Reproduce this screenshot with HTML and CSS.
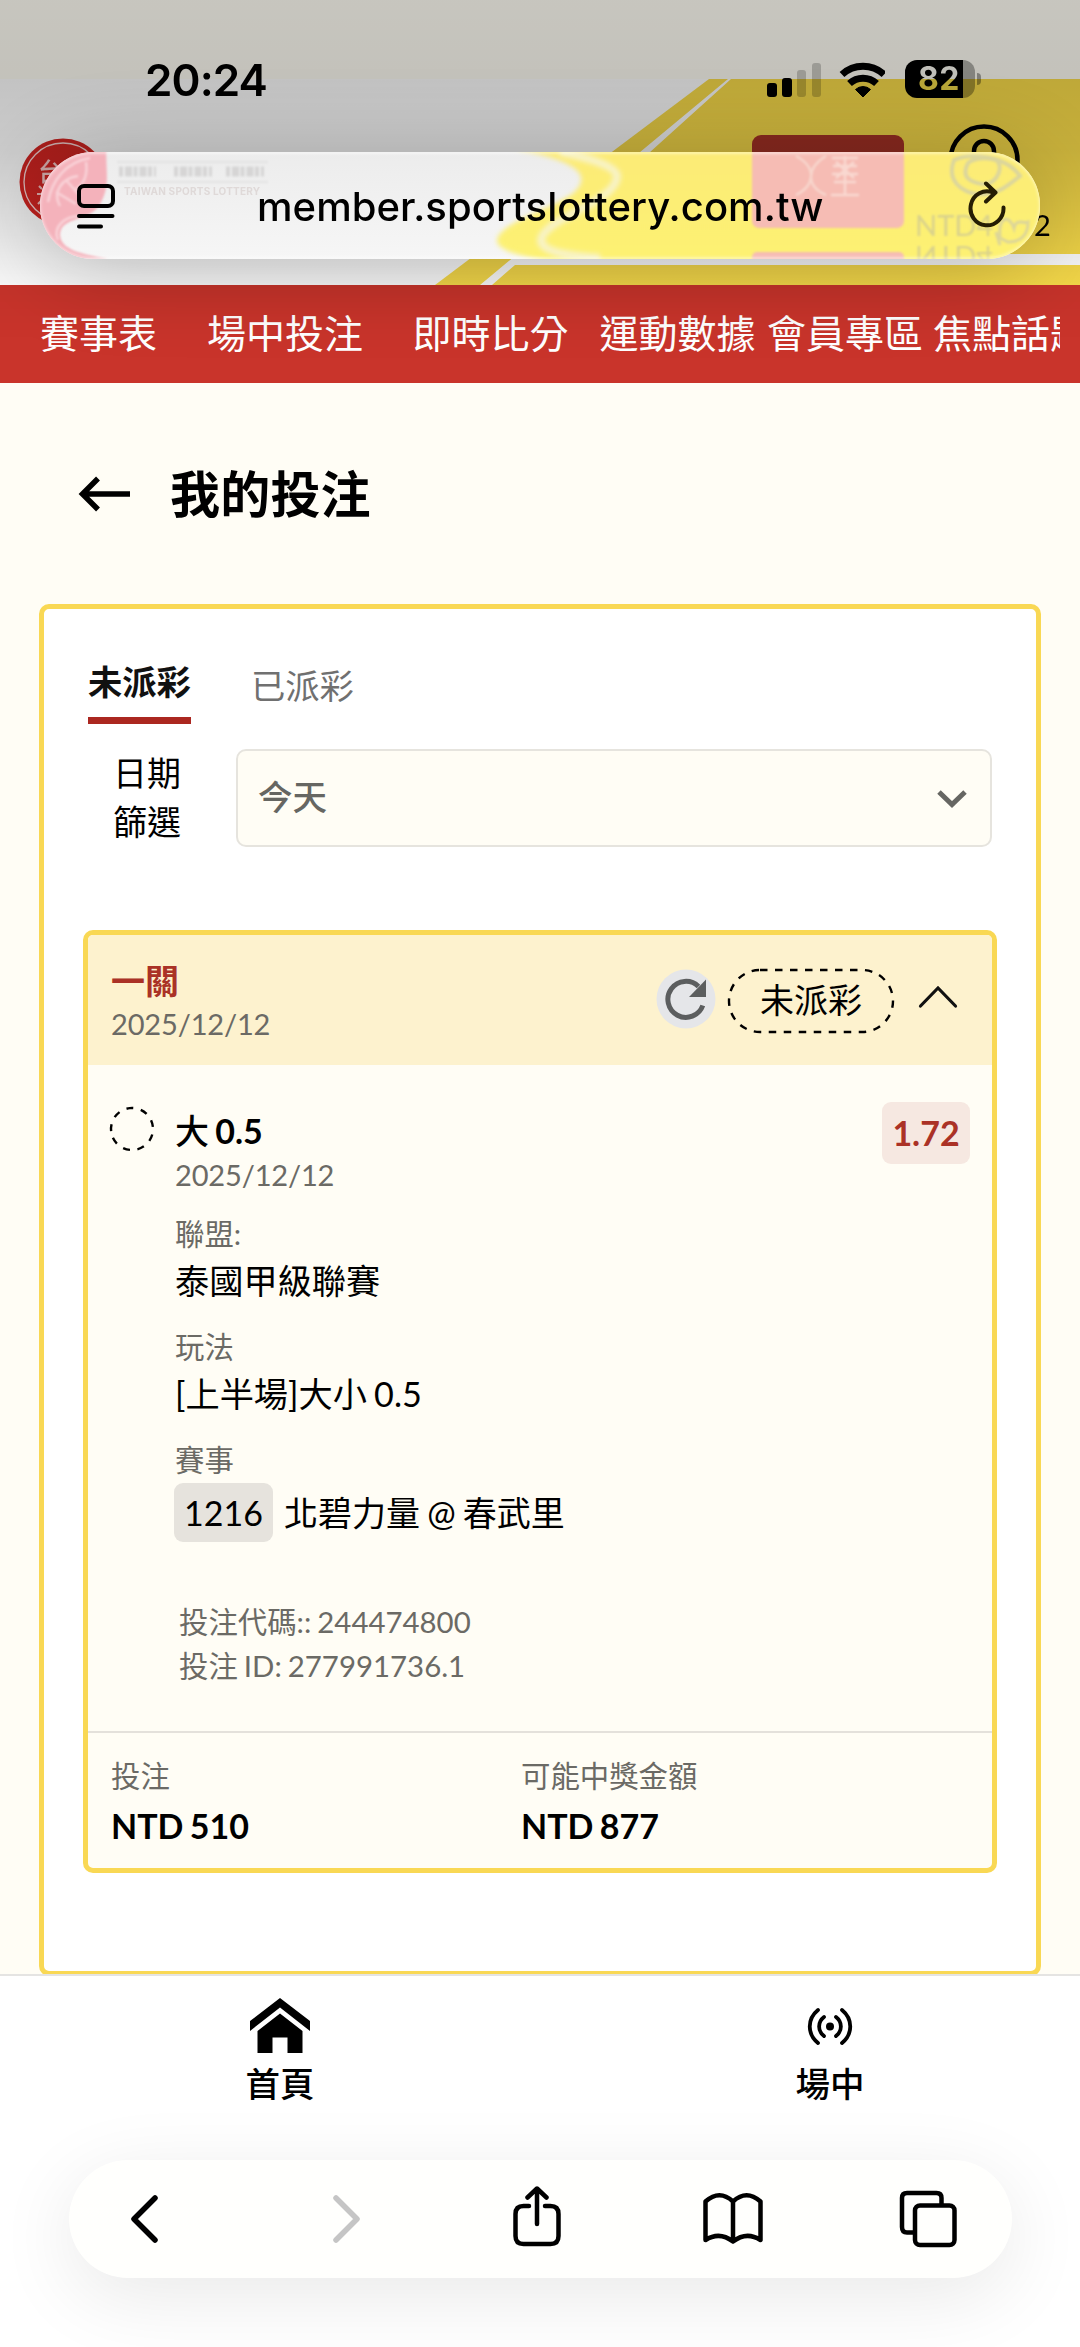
FILE: index.html
```html
<!DOCTYPE html>
<html lang="zh-Hant">
<head>
<meta charset="utf-8">
<meta name="viewport" content="width=device-width">
<title>我的投注</title>
<link rel="stylesheet" href="styles.css">
</head>
<body>
<div class="screen">
  <header class="top">
    <svg class="banner" viewBox="0 0 1080 285" aria-hidden="true">
      <rect width="1080" height="79" fill="#fffdf4"/>
      <rect y="79" width="1080" height="206" fill="#fff"/>
      <path d="M709 79H1080V285H435Z" fill="#f9dc4a"/>
      <path d="M728 79H731L517 265H1080V255H530L731 79Z" fill="#fff"/>
      <path d="M728 79H731L537 254H1080V265H515L492 285H480Z" fill="#fff"/>
      <circle cx="63" cy="182" r="43.5" fill="#d32522"/>
      <circle cx="63" cy="182" r="39" fill="none" stroke="#fff" stroke-opacity=".8" stroke-width="1.3"/>
      <text class="seal" x="38" y="181">台</text>
      <path d="M39 186L42 189M37 194H42M38 204L43 199" stroke="#fff" stroke-opacity=".7" stroke-width="2.200"/>
      <rect x="752" y="135" width="152" height="60" rx="9" fill="#a73226"/>
      <circle cx="984" cy="160" r="33.5" fill="none" stroke="#000" stroke-width="4.5"/>
      <path d="M974 156V151a10 10 0 0 1 20 0V156" fill="none" stroke="#000" stroke-width="4.5"/>
      <text class="balance" x="1034" y="235.500">2</text>
    </svg>
    <div class="dim"></div>
    <div class="status">
      <span class="clock">20:24</span>
      <svg class="signals" viewBox="764 58 120 40" aria-hidden="true">
        <rect x="766" y="82" width="10" height="14" rx="3"/>
        <rect x="781" y="77" width="10" height="19" rx="3"/>
        <rect x="796" y="69" width="9" height="27" rx="3" opacity=".2"/>
        <rect x="811" y="62" width="9" height="34" rx="3" opacity=".2"/>
        <path d="M862 96L854.500 88.500A11 11 0 0 1 869.500 88.500Z" stroke="#000" stroke-width="1" stroke-linejoin="round"/>
        <path d="M848.500 82.500A20 20 0 0 1 875.500 82.500" fill="none" stroke="#000" stroke-width="7"/>
        <path d="M841 73.500A31 31 0 0 1 883 73.500" fill="none" stroke="#000" stroke-width="7"/>
      </svg>
      <span class="battery"><span class="level">82</span></span>
    </div>
    <div class="address">
      <svg class="glass" viewBox="40 152 1000 107" aria-hidden="true">
        <defs>
          <linearGradient id="base" x1="0" y1="0" x2="0" y2="1"><stop offset="0" stop-color="#ececec"/><stop offset="1" stop-color="#f6f6f6"/></linearGradient>
          <linearGradient id="gold" x1="0" y1="0" x2="0" y2="1"><stop offset="0" stop-color="#fcea77"/><stop offset="1" stop-color="#fdf272"/></linearGradient>
          <filter id="b2" x="-10%" y="-10%" width="120%" height="120%"><feGaussianBlur stdDeviation="2.500"/></filter>
          <filter id="b1" x="-20%" y="-20%" width="140%" height="140%"><feGaussianBlur stdDeviation="1"/></filter>
        </defs>
        <rect x="40" y="152" width="1000" height="107" fill="url(#base)"/>
        <path d="M30 140H107C104 168 112 184 100 204C90 222 62 216 60 234C60 250 82 254 108 259H30Z" fill="#f4b2bb" filter="url(#b1)"/>
        <g fill="none" stroke="#fbdde1" stroke-opacity=".75" stroke-width="2.500" filter="url(#b1)">
          <path d="M48 202C52 180 66 162 90 158M60 206C52 192 62 178 78 176M66 180L80 196M56 192L76 204M86 162C88 174 84 186 74 190M58 240C52 226 66 216 80 216"/>
        </g>
        <g filter="url(#b1)">
          <path d="M117 162H268M117 182H268" stroke="#e0e0e0" stroke-width="1.500"/>
          <path d="M119 171.500H156M174 171.500H212M226 171.500H264" stroke="#d6d5d5" stroke-width="10" stroke-dasharray="4 2 7 1.500"/>
        </g>
        <text class="ghost-text" x="124" y="194.500" textLength="136">TAIWAN SPORTS LOTTERY</text>
        <path d="M520 150C570 160 590 172 578 188C566 206 500 220 497 240C496 252 530 258 560 264H1060V140H500Z" fill="url(#gold)" filter="url(#b2)"/>
        <path d="M560 152C590 158 616 166 617 176C617 202 544 218 541 240C541 252 570 256 600 258" fill="none" stroke="#f8f3c6" stroke-width="8" filter="url(#b2)"/>
        <g filter="url(#b1)">
          <rect x="752" y="146" width="152" height="82" rx="7" fill="#f6bcb4"/>
          <rect x="752" y="252" width="152" height="12" rx="5" fill="#f6bcb4"/>
          <path d="M796 156C818 168 814 186 796 195M826 156C806 168 806 186 826 195" fill="none" stroke="#f8d5cc" stroke-width="2.500"/>
          <path d="M832 158H858M833 166H857M832 174H858M834 182H856M831 195H859M845 156V195M836 162L854 178M854 162L836 178" fill="none" stroke="#f9d8d0" stroke-width="2.500"/>
          <path d="M954 160C944 186 972 196 982 194C996 196 1010 184 1020 176C1006 156 972 152 954 160ZM968 163C958 182 980 184 986 184C998 182 1004 166 996 160C986 157 974 158 968 163Z" fill="none" stroke="#dcd69c" stroke-width="4"/>
          <path d="M1000 238C998 214 1010 216 1014 228C1016 218 1024 224 1028 222C1028 236 1020 242 1008 242ZM996 232L1000 245" fill="none" stroke="#dcd59a" stroke-width="3"/>
          <text class="ghost-money" x="915" y="235.500">NTD4</text>
          <text class="ghost-money" transform="translate(915 245.500) scale(1 -1)" x="0" y="0">NTD4</text>
        </g>
      </svg>
      <svg class="page-menu" viewBox="0 0 40 48" aria-hidden="true"><g fill="none" stroke="#000" stroke-linecap="round"><rect x="3" y="3" width="34" height="20" rx="5" stroke-width="4"/><path d="M3 33H36.500M3 43.500H25" stroke-width="4"/></g></svg>
      <span class="url">member.sportslottery.com.tw</span>
      <svg class="reload" viewBox="0 0 40 50" aria-hidden="true"><path d="M36.500 26.500A16.500 17 0 1 1 26 11.500M19 2.500L28.500 11.500L19 20.500" fill="none" stroke="#251d04" stroke-width="4" stroke-linecap="round" stroke-linejoin="round"/></svg>
    </div>
  </header>

  <nav class="menu">
    <a>賽事表</a><a class="n2">場中投注</a><a class="n3">即時比分</a><a class="n4">運動數據</a><a class="n5">會員專區</a><a class="n6">焦點話題</a>
  </nav>

  <main>
    <div class="heading">
      <svg class="back" viewBox="0 0 54 38" aria-hidden="true"><path d="M52 19H4M20 3.500L4.500 19L20 34.500" fill="none" stroke="#000" stroke-width="5.500"/></svg>
      <h1>我的投注</h1>
    </div>
    <section class="panel">
      <div class="tabs"><span class="tab active">未派彩</span><span class="tab">已派彩</span></div>
      <div class="filter">
        <label>日期<br>篩選</label>
        <div class="select"><span>今天</span>
          <svg width="30" height="18" viewBox="0 0 30 18" aria-hidden="true"><path d="M2 2L15 14.500L28 2" fill="none" stroke="#666662" stroke-width="5"/></svg>
        </div>
      </div>

      <article class="bet">
        <div class="bet-head">
          <div class="bet-title"><strong>一關</strong><span class="small date">2025/12/12</span></div>
          <svg class="refresh" viewBox="0 0 60 60" aria-hidden="true"><circle cx="30" cy="30" r="29.500" fill="#e5e6e9"/><path d="M46.800 36.500A18 18 0 1 1 42.500 17.500" fill="none" stroke="#5c5e5f" stroke-width="5"/><path d="M50 10.500V28H33Z" fill="#5c5e5f"/></svg>
          <div class="pill"><svg viewBox="0 0 168 66" aria-hidden="true"><rect x="2" y="2" width="164" height="62" rx="31" fill="none" stroke="#000" stroke-width="2.400" stroke-dasharray="7.500 7.500"/></svg><span>未派彩</span></div>
          <svg class="up" viewBox="0 0 40 24" aria-hidden="true"><path d="M2.500 21L20 3L37.500 21" fill="none" stroke="#111" stroke-width="3.200" stroke-linecap="round"/></svg>
        </div>
        <div class="bet-body">
          <svg class="dot" viewBox="0 0 46 46" aria-hidden="true"><circle cx="23" cy="23" r="21" fill="none" stroke="#000" stroke-width="2.400" stroke-dasharray="7 7.660" transform="rotate(174 23 23)"/></svg>
          <div class="detail">
            <div class="pick"><span class="side">大</span> 0.5</div>
            <div class="small date">2025/12/12</div>
            <div class="small gap-a">聯盟:</div>
            <div class="value">泰國甲級聯賽</div>
            <div class="small gap-b">玩法</div>
            <div class="value">[上半場]大小 0.5</div>
            <div class="small gap-b">賽事</div>
            <div class="match"><span class="code">1216</span><span>北碧力量 @ 春武里</span></div>
            <div class="ids small">投注代碼:: 244474800<br>投注 ID: 277991736.1</div>
          </div>
          <div class="odds">1.72</div>
        </div>
        <div class="bet-foot">
          <div><div class="small">投注</div><div class="money">NTD 510</div></div>
          <div><div class="small">可能中獎金額</div><div class="money">NTD 877</div></div>
        </div>
      </article>
    </section>
  </main>

  <footer class="bottom">
    <div class="links">
      <a><svg viewBox="0 0 60 56" aria-hidden="true"><path d="M30 0L60 23V33L30 9.500L0 33V23Z"/><path d="M30 15.500L52.500 33V55H37.500V39.500H22.500V55H7.500V33Z"/></svg>首頁</a>
      <a><svg viewBox="0 0 60 56" aria-hidden="true"><circle cx="30" cy="28.500" r="4"/><g fill="none" stroke="#000" stroke-width="3.800" stroke-linecap="round"><path d="M24 19C17.500 24 17.500 33 24 38M36 19C42.500 24 42.500 33 36 38M18 12C7 21 7 36 18 45M42 12C53 21 53 36 42 45"/></g></svg>場中</a>
    </div>
    <div class="toolbar">
      <svg class="t1" viewBox="0 0 30 50" aria-hidden="true"><path d="M25 4L4 25L25 46"/></svg>
      <svg class="t2" viewBox="0 0 30 50" aria-hidden="true"><path d="M5 4L26 25L5 46"/></svg>
      <svg class="t3" viewBox="0 0 50 62" aria-hidden="true"><path d="M17 20H11.500Q3.500 20 3.500 28V50Q3.500 58 11.500 58H38.500Q46.500 58 46.500 50V28Q46.500 20 38.500 20H33M25 38V3M15.500 11.500L25 2.500L34.500 11.500"/></svg>
      <svg class="t4" viewBox="0 0 62 54" aria-hidden="true"><path d="M31 9.500Q17.500-3 3.500 9.500V48Q17.500 39 31 49.500Q44.500 39 58.500 48V9.500Q44.500-3 31 9.500V49"/></svg>
      <svg class="t5" viewBox="0 0 60 60" aria-hidden="true"><path d="M43.500 15V9Q43.500 4 38.500 4H9Q4 4 4 9V38Q4 43.500 9 43.500H15"/><rect x="17" y="16.500" width="39.500" height="39.500" rx="5"/></svg>
    </div>
  </footer>
</div>
</body>
</html>
```
FILE: styles.css
```css
* { box-sizing: border-box; }
body {
  margin: 0;
  background: #fffdf5;
  color: #000;
  font-family: Lato, "Noto Sans CJK TC", sans-serif;
}
svg { display: block; flex: none; }
.screen {
  width: 1080px;
  height: 2347px;
  overflow: hidden;
  display: flex;
  flex-direction: column;
}

/* Header with status bar and address bar */
.top { position: relative; z-index: 2; height: 285px; flex: none; }
.banner { position: absolute; inset: 0; width: 1080px; height: 285px; }
.seal { font: 500 25px "Noto Sans CJK TC", sans-serif; fill: #fff; fill-opacity: .75; }
.balance { font: 400 29px Lato, sans-serif; }
.dim {
  position: absolute;
  inset: 0 0 auto;
  height: 340px;
  background: linear-gradient(rgba(0,0,0,.22) 0, rgba(0,0,0,.235) 80px, rgba(0,0,0,.2) 150px, rgba(0,0,0,.03) 285px, transparent);
}
.status { position: relative; display: flex; align-items: center; height: 80px; padding: 80px 0 0 145px; }
.clock { width: 620px; font: 600 44px/48px Inter, sans-serif; letter-spacing: -.9px; }
.signals { width: 120px; height: 40px; margin-top: -3px; }
.battery {
  position: relative;
  width: 70px;
  height: 38px;
  margin: -2px 0 0 20px;
  border-radius: 12px;
  background: linear-gradient(90deg, #000 57.500px, rgba(0,0,0,.32) 57.500px);
}
.battery::after {
  content: "";
  position: absolute;
  left: 72px;
  top: 13px;
  width: 4px;
  height: 12px;
  border-radius: 0 5px 5px 0;
  background: rgba(0,0,0,.35);
}
.level {
  display: block;
  padding-left: 13px;
  font: 700 32px/38px Inter, sans-serif;
  letter-spacing: .3px;
  background: linear-gradient(#c0bfb9 19px, #b8a638 19px);
  background-clip: text;
  -webkit-background-clip: text;
  color: transparent;
}
.address {
  position: absolute;
  left: 40px;
  top: 152px;
  width: 1000px;
  height: 107px;
  display: flex;
  align-items: center;
  border-radius: 54px;
  box-shadow: 0 8px 90px rgba(0,0,0,.24);
}
.glass { position: absolute; inset: 0; width: 1000px; height: 107px; border-radius: 54px; }
.address::after {
  content: "";
  position: absolute;
  inset: 0;
  border: 2px solid rgba(255,255,255,.7);
  border-width: 2px 1px;
  border-radius: 54px;
  mix-blend-mode: soft-light;
  box-shadow: inset 0 0 3px #fff;
}
.ghost-text { font: 700 10px Inter, sans-serif; fill: #dfd9d8; }
.ghost-money { font: 400 29px Lato, sans-serif; fill: #d9d18c; }
.page-menu, .url, .reload { position: relative; }
.page-menu { width: 40px; height: 48px; margin: 3px 0 0 36px; }
.url { width: 582px; margin: 2px 0 0 141px; font: 500 40px/50px Inter, sans-serif; letter-spacing: .07px; white-space: nowrap; }
.reload { width: 40px; height: 50px; margin: 0 0 0 128px; }

/* Red section menu */
.menu {
  display: flex;
  flex: none;
  height: 98px;
  padding-left: 40px;
  background: #c9342b;
  border-right: 20px solid #c9342b;
  overflow: hidden;
  color: #fff;
  font: 400 39px/93px "Noto Sans CJK TC", sans-serif;
  white-space: nowrap;
}
.menu a { flex: none; }
.n2 { margin-left: 50px; }
.n3 { margin-left: 49.500px; }
.n4 { margin-left: 31px; }
.n5 { margin-left: 11.500px; }
.n6 { margin-left: 10px; }

/* Bets */
main { flex: none; height: 1591px; overflow: hidden; }
.heading { display: flex; align-items: center; height: 221px; padding: 0 0 0 78px; }
.back { width: 54px; height: 38px; }
h1 { margin: 0 0 0 38px; font-size: 50px; line-height: 72px; font-weight: 700; letter-spacing: .2px; }
.panel {
  width: 1002px;
  height: 1372px;
  margin-left: 39px;
  padding: 45px 39px 0;
  border: 5px solid #f9d854;
  border-radius: 10px;
  background: #fff;
}
.tabs { display: flex; gap: 60px; height: 70px; padding-left: 5px; }
.tab { height: 70px; font-size: 34.300px; line-height: 64px; font-weight: 400; color: #707070; }
.tab.active { line-height: 56px; font-weight: 700; color: #111; border-bottom: 7px solid #ab2720; }
.filter { display: flex; height: 122px; padding: 25px 0 0 30px; }
label { width: 123px; margin-top: -1px; font-size: 34px; line-height: 49px; text-align: left; }
.select {
  display: flex;
  justify-content: space-between;
  align-items: center;
  width: 756px;
  height: 98px;
  padding: 0 23px 0 20px;
  border: 2px solid #e6e4de;
  border-radius: 10px;
  background: #fffdf5;
  color: #666662;
  font-size: 34.500px;
  font-weight: 500;
}
.select span { padding-bottom: 3px; line-height: 46px; }
.select svg { margin-top: 2px; }
.bet {
  width: 914px;
  height: 943px;
  margin: 84px 0 0;
  border: 5px solid #f9d854;
  border-radius: 10px;
  background: #fffdf5;
  overflow: hidden;
}
.small { font-size: 29.400px; line-height: 44px; color: #6b6a65; word-spacing: -1.500px; }
.small.date { font-size: 29px; letter-spacing: -.15px; }
.bet-head { display: flex; align-items: center; height: 130px; padding-left: 23px; background: #fdf2ce; }
.bet-title { display: flex; flex-direction: column; width: 545px; padding-top: 3px; }
.bet-title strong { font-size: 34px; line-height: 44px; color: #aa3226; }
.bet-title .small { line-height: 42px; }
.refresh { width: 60px; height: 60px; margin-top: -3px; }
.pill { position: relative; width: 168px; height: 66px; margin: 2px 0 0 11px; text-align: center; font-size: 34px; line-height: 64px; }
.pill svg { position: absolute; inset: 0; }
.up { width: 40px; height: 24px; margin: -6px 0 0 23px; }
.bet-body { display: flex; height: 666px; padding-left: 21px; }
.dot { width: 46px; height: 46px; margin-top: 41px; }
.detail { width: 707px; padding: 43px 0 0 20px; }
.pick { font-size: 34px; line-height: 45px; font-weight: 700; word-spacing: -2px; }
.side { font-weight: 500; }
.gap-a { margin-top: 15px; }
.gap-b { margin-top: 21px; }
.value { margin-top: 2px; font-size: 34.200px; line-height: 46px; word-spacing: -1.500px; }
.match { display: flex; gap: 11px; margin-top: 1px; font-size: 34px; line-height: 59px; word-spacing: -1.500px; }
.code { width: 99px; margin-left: -1px; text-align: center; border-radius: 9px; background: #e6e3dd; }
.ids { margin-top: 58px; padding-left: 4px; }
.odds {
  width: 88px;
  height: 62px;
  margin: 37px 0 0 20px;
  border-radius: 9px;
  background: #f6e8e1;
  color: #ab3226;
  text-align: center;
  font-size: 34px;
  line-height: 61px;
  font-weight: 700;
}
.bet-foot { display: grid; grid-template-columns: 410px 1fr; padding: 21px 0 0 23px; border-top: 2px solid #e4e1db; }
.money { margin-top: 6px; font-size: 34px; line-height: 43px; font-weight: 700; word-spacing: -2px; }

/* Bottom navigation and browser toolbar */
.bottom { flex: 1; border-top: 2px solid #e5e4e2; background: #fff; }
.links { display: grid; grid-template-columns: 560px 540px; height: 184px; padding-top: 22px; }
.links a { display: flex; flex-direction: column; align-items: center; gap: 5px; font-size: 34.500px; line-height: 50px; font-weight: 500; }
.links svg { width: 60px; height: 56px; }
.toolbar {
  display: flex;
  align-items: center;
  width: 943px;
  height: 118px;
  margin-left: 69px;
  border-radius: 59px;
  background: #fffffd;
  box-shadow: 0 18px 80px rgba(0,0,0,.09);
}
.toolbar path, .toolbar rect { fill: none; stroke: #000; stroke-width: 4.500; stroke-linecap: round; stroke-linejoin: round; }
.toolbar .t1 path, .toolbar .t2 path { stroke-width: 5.500; }
.toolbar .t2 path { stroke: #c5c5c5; }
.t1 { width: 30px; height: 50px; margin-left: 61px; }
.t2 { width: 30px; height: 50px; margin-left: 171px; }
.t3 { width: 50px; height: 62px; margin: -5px 0 0 151px; }
.t4 { width: 62px; height: 54px; margin-left: 140px; }
.t5 { width: 60px; height: 60px; margin-left: 134px; }
```
